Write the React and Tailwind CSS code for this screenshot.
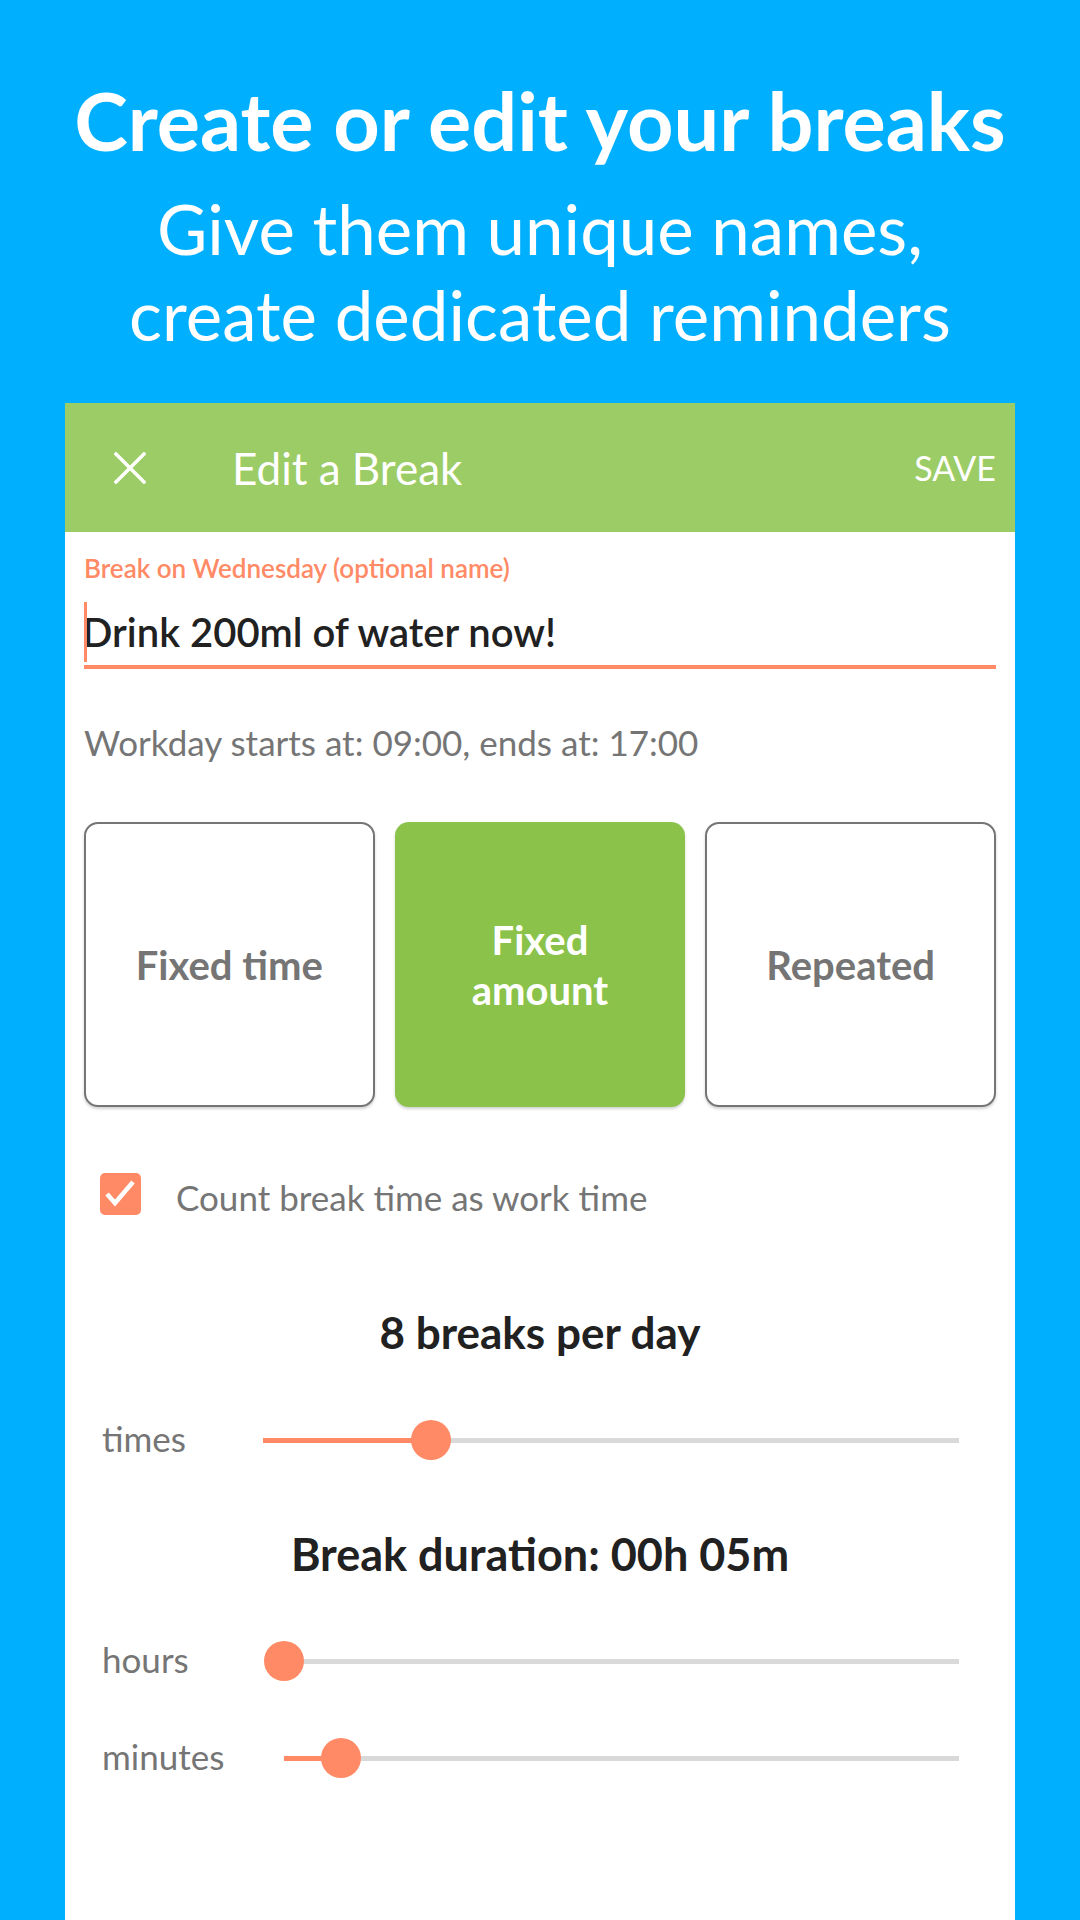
import React from 'react';

const sliders = {
  times: { start: 263, thumb: 431 },
  hours: { start: 284, thumb: 284 },
  minutes: { start: 284, thumb: 341 },
};

const TRACK_END = 959;

// Simple range-looking row: label on the left, track + thumb on the right
const SliderRow = ({ label, name, className }) => {
  const { start, thumb } = sliders[name];
  const width = TRACK_END - start;
  const fill = thumb - start;
  return (
    <div className={`flex items-center h-[40px] ${className}`}>
      <div className="text-[35px] text-[#757575] pl-[18px] pb-[3px]" style={{ width: start - 84 }}>
        {label}
      </div>
      <div className="relative h-[40px] flex items-center" style={{ width }}>
        <div className="h-[5px] w-full bg-[#d9d9d9] flex">
          <div className="h-full bg-[#ff8a65]" style={{ width: fill }} />
        </div>
        <div
          className="absolute top-0 w-[40px] h-[40px] rounded-full bg-[#ff8a65]"
          style={{ left: fill - 20 }}
        />
      </div>
    </div>
  );
};

const ModeButton = ({ children, active }) => (
  <div
    className={`flex items-center justify-center text-center rounded-[14px] font-bold text-[40px] leading-[50px] shadow-[0_2px_3px_rgba(0,0,0,0.18)] ${
      active ? 'bg-[#8bc34a] text-white' : 'bg-white text-[#757575] border-2 border-[#757575]'
    }`}
  >
    {children}
  </div>
);

const App = () => {
  return (
    <div className="w-[1080px] h-[1920px] bg-[#00b0ff] overflow-hidden flex flex-col items-center font-['Lato',sans-serif]">
      {/* Heading */}
      <h1 className="mt-[70px] text-white font-bold text-[81px] leading-[100px] text-center">
        Create or edit your breaks
      </h1>
      <p className="mt-[16px] text-white text-[69px] leading-[86px] text-center">
        Give them unique names,
        <br />
        create dedicated reminders
      </p>

      {/* Edit card */}
      <div className="mt-[45px] w-[950px] flex-1 bg-white flex flex-col">
        <div className="h-[129px] bg-[#9ccc65] flex items-center text-white shrink-0">
          <svg className="ml-[49px]" width="32" height="32" viewBox="0 0 32 32">
            <path d="M2 2 L30 30 M30 2 L2 30" stroke="white" strokeWidth="3.5" strokeLinecap="square" />
          </svg>
          <div className="ml-[86px] text-[44px]">Edit a Break</div>
          <div className="ml-auto mr-[19px] text-[34px]">SAVE</div>
        </div>

        <div className="px-[19px] flex flex-col">
          <div className="mt-[21px] text-[26px] leading-[30px] font-semibold text-[#ff8a65]">
            Break on Wednesday (optional name)
          </div>
          <div className="relative mt-[16px] h-[66px] flex items-center">
            <div className="absolute left-0 top-[3px] w-[3px] h-[60px] bg-[#ff8a65]" />
            <div className="-ml-[2px] text-[40px] font-semibold text-[#212121]">Drink 200ml of water now!</div>
          </div>
          <div className="h-[4px] bg-[#ff8a65]" />

          <div className="mt-[53px] text-[35px] leading-[40px] text-[#757575]">
            Workday starts at: 09:00, ends at: 17:00
          </div>

          <div className="mt-[60px] grid grid-cols-3 gap-[20px] h-[285px]">
            <ModeButton>Fixed time</ModeButton>
            <ModeButton active>
              Fixed
              <br />
              amount
            </ModeButton>
            <ModeButton>Repeated</ModeButton>
          </div>

          <div className="mt-[66px] h-[42px] flex items-center">
            <div className="ml-[16px] w-[41px] h-[42px] rounded-[5px] bg-[#ff8a65]">
              <svg width="41" height="42" viewBox="0 0 41 42">
                <path d="M7 21 L15 30 L33 9" fill="none" stroke="white" strokeWidth="4.5" />
              </svg>
            </div>
            <div className="ml-[35px] pt-[6px] text-[35px] text-[#757575]">Count break time as work time</div>
          </div>

          <div className="mt-[92px] text-center text-[44px] leading-[50px] font-bold text-[#212121]">
            8 breaks per day
          </div>
          <SliderRow className="mt-[63px]" label="times" name="times" />

          <div className="mt-[69px] text-center text-[45px] leading-[50px] font-bold text-[#212121]">
            Break duration: 00h 05m
          </div>
          <SliderRow className="mt-[62px]" label="hours" name="hours" />
          <SliderRow className="mt-[57px]" label="minutes" name="minutes" />
        </div>
      </div>
    </div>
  );
};

export default App;
